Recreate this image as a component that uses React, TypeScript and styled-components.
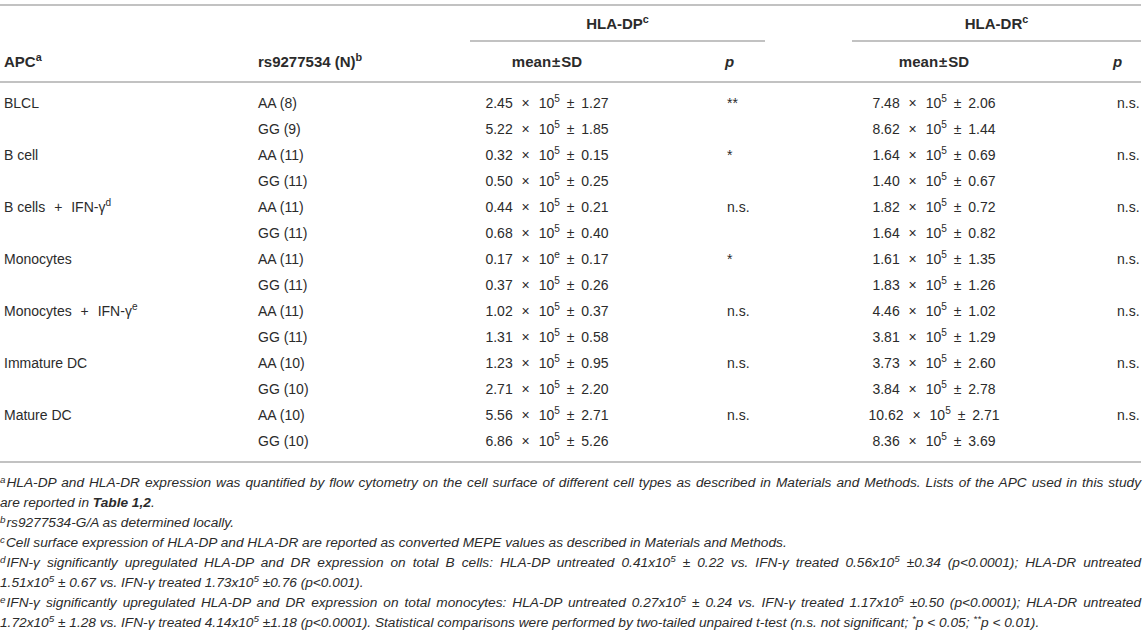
import React from 'react';
import styled, { createGlobalStyle } from 'styled-components';

type Row = {
  apc?: React.ReactNode;
  geno: string;
  dp: [string, string, string];
  dpP?: string;
  dr: [string, string, string];
  drP?: string;
};

const GlobalStyle = createGlobalStyle`
  html, body {
    margin: 0;
    padding: 0;
    background: #fff;
  }
  body {
    font-family: "Liberation Sans", Arial, sans-serif;
    color: #2b2b2b;
  }
`;

const Page = styled.div`
  width: 1141px;
  padding-top: 4px;
`;

const Table = styled.table`
  width: 1141px;
  border-collapse: collapse;
  border-spacing: 0;
  table-layout: fixed;
  font-size: 14px;
  border-top: 2px solid #c2c2c2;
  border-bottom: 2px solid #c2c2c2;
`;

const HeadRow = styled.tr<{ $h: number; $rule?: boolean }>`
  height: ${(p) => p.$h}px;
  ${(p) => (p.$rule ? 'border-bottom: 2px solid #c2c2c2;' : '')}
`;

const Th = styled.th<{ $align?: 'left' | 'center'; $pad?: number; $rule?: boolean; $italic?: boolean }>`
  padding: 0 0 0 ${(p) => p.$pad ?? 0}px;
  text-align: ${(p) => p.$align ?? 'left'};
  font-size: 15px;
  font-weight: bold;
  font-style: ${(p) => (p.$italic ? 'italic' : 'normal')};
  vertical-align: middle;
  white-space: nowrap;
  border-bottom: ${(p) => (p.$rule ? '2px solid #c2c2c2' : 'none')};
`;

const DataRow = styled.tr`
  height: 26px;
  &:first-child td {
    padding-top: 7px;
  }
  &:last-child td {
    padding-bottom: 7px;
  }
`;

const Td = styled.td<{ $align?: 'left' | 'center'; $pad?: number }>`
  padding: 0 0 0 ${(p) => p.$pad ?? 0}px;
  text-align: ${(p) => p.$align ?? 'left'};
  vertical-align: middle;
  white-space: nowrap;
  line-height: 26px;
`;

const Sup = styled.sup`
  font-size: 0.72em;
  line-height: 0;
  vertical-align: 0.55em;
`;

const Op = styled.span<{ $gap?: number }>`
  margin: 0 ${(p) => p.$gap ?? 3}px;
`;

const Notes = styled.div`
  margin-top: 10px;
  font-size: 13.7px;
  font-style: italic;
  line-height: 20px;
  white-space: nowrap;
`;

const Line = styled.div<{ $full?: boolean }>`
  text-align: ${(p) => (p.$full ? 'justify' : 'left')};
  text-align-last: ${(p) => (p.$full ? 'justify' : 'left')};
`;

const NoteMark = styled.sup`
  font-size: 0.72em;
  line-height: 0;
  vertical-align: 0.45em;
  margin-right: 1px;
`;

const Ref = styled.b`
  font-weight: bold;
`;

const Val = ({ v }: { v: [string, string, string] }) => (
  <>
    {v[0]} <Op $gap={5}>×</Op> 10<Sup>{v[1]}</Sup> <Op $gap={3}>±</Op> {v[2]}
  </>
);

const Exp = ({ b, e }: { b: string; e: string }) => (
  <>
    {b}x10<Sup>{e}</Sup>
  </>
);

const Plus = () => <Op $gap={5}>+</Op>;

const rows: Row[] = [
  { apc: 'BLCL', geno: 'AA (8)', dp: ['2.45', '5', '1.27'], dpP: '**', dr: ['7.48', '5', '2.06'], drP: 'n.s.' },
  { geno: 'GG (9)', dp: ['5.22', '5', '1.85'], dr: ['8.62', '5', '1.44'] },
  { apc: 'B cell', geno: 'AA (11)', dp: ['0.32', '5', '0.15'], dpP: '*', dr: ['1.64', '5', '0.69'], drP: 'n.s.' },
  { geno: 'GG (11)', dp: ['0.50', '5', '0.25'], dr: ['1.40', '5', '0.67'] },
  {
    apc: (
      <>
        B cells <Plus /> IFN-γ<Sup>d</Sup>
      </>
    ),
    geno: 'AA (11)',
    dp: ['0.44', '5', '0.21'],
    dpP: 'n.s.',
    dr: ['1.82', '5', '0.72'],
    drP: 'n.s.',
  },
  { geno: 'GG (11)', dp: ['0.68', '5', '0.40'], dr: ['1.64', '5', '0.82'] },
  { apc: 'Monocytes', geno: 'AA (11)', dp: ['0.17', 'e', '0.17'], dpP: '*', dr: ['1.61', '5', '1.35'], drP: 'n.s.' },
  { geno: 'GG (11)', dp: ['0.37', '5', '0.26'], dr: ['1.83', '5', '1.26'] },
  {
    apc: (
      <>
        Monocytes <Plus /> IFN-γ<Sup>e</Sup>
      </>
    ),
    geno: 'AA (11)',
    dp: ['1.02', '5', '0.37'],
    dpP: 'n.s.',
    dr: ['4.46', '5', '1.02'],
    drP: 'n.s.',
  },
  { geno: 'GG (11)', dp: ['1.31', '5', '0.58'], dr: ['3.81', '5', '1.29'] },
  { apc: 'Immature DC', geno: 'AA (10)', dp: ['1.23', '5', '0.95'], dpP: 'n.s.', dr: ['3.73', '5', '2.60'], drP: 'n.s.' },
  { geno: 'GG (10)', dp: ['2.71', '5', '2.20'], dr: ['3.84', '5', '2.78'] },
  { apc: 'Mature DC', geno: 'AA (10)', dp: ['5.56', '5', '2.71'], dpP: 'n.s.', dr: ['10.62', '5', '2.71'], drP: 'n.s.' },
  { geno: 'GG (10)', dp: ['6.86', '5', '5.26'], dr: ['8.36', '5', '3.69'] },
];

export default function App() {
  return (
    <Page>
      <GlobalStyle />
      <Table>
        <colgroup>
          <col style={{ width: 254 }} />
          <col style={{ width: 216 }} />
          <col style={{ width: 154 }} />
          <col style={{ width: 141 }} />
          <col style={{ width: 87 }} />
          <col style={{ width: 164 }} />
          <col style={{ width: 125 }} />
        </colgroup>
        <thead>
          <HeadRow $h={36}>
            <Th />
            <Th />
            <Th colSpan={2} $align="center" $rule>
              HLA-DP<Sup>c</Sup>
            </Th>
            <Th />
            <Th colSpan={2} $align="center" $rule>
              HLA-DR<Sup>c</Sup>
            </Th>
          </HeadRow>
          <HeadRow $h={41} $rule>
            <Th $pad={4}>
              APC<Sup>a</Sup>
            </Th>
            <Th $pad={4}>
              rs9277534 (N)<Sup>b</Sup>
            </Th>
            <Th $align="center">
              mean<Op $gap={1}>±</Op>SD
            </Th>
            <Th $pad={101} $italic>
              p
            </Th>
            <Th />
            <Th $align="center">
              mean<Op $gap={1}>±</Op>SD
            </Th>
            <Th $pad={97} $italic>
              p
            </Th>
          </HeadRow>
        </thead>
        <tbody>
          {rows.map((r, i) => (
            <DataRow key={i}>
              <Td $pad={4}>{r.apc}</Td>
              <Td $pad={4}>{r.geno}</Td>
              <Td $align="center">
                <Val v={r.dp} />
              </Td>
              <Td $pad={103}>{r.dpP}</Td>
              <Td />
              <Td $align="center">
                <Val v={r.dr} />
              </Td>
              <Td $pad={101}>{r.drP}</Td>
            </DataRow>
          ))}
        </tbody>
      </Table>
      <Notes>
        <Line $full>
          <NoteMark>a</NoteMark>HLA-DP and HLA-DR expression was quantified by flow cytometry on the cell surface of
          different cell types as described in Materials and Methods. Lists of the APC used in this study
        </Line>
        <Line>
          are reported in <Ref>Table 1,2</Ref>.
        </Line>
        <Line>
          <NoteMark>b</NoteMark>rs9277534-G/A as determined locally.
        </Line>
        <Line>
          <NoteMark>c</NoteMark>Cell surface expression of HLA-DP and HLA-DR are reported as converted MEPE values as
          described in Materials and Methods.
        </Line>
        <Line $full>
          <NoteMark>d</NoteMark>IFN-γ significantly upregulated HLA-DP and DR expression on total B cells: HLA-DP
          untreated <Exp b="0.41" e="5" /> ± 0.22 vs. IFN-γ treated <Exp b="0.56" e="5" /> ±0.34 (p&lt;0.0001); HLA-DR
          untreated
        </Line>
        <Line>
          <Exp b="1.51" e="5" /> ± 0.67 vs. IFN-γ treated <Exp b="1.73" e="5" /> ±0.76 (p&lt;0.001).
        </Line>
        <Line $full>
          <NoteMark>e</NoteMark>IFN-γ significantly upregulated HLA-DP and DR expression on total monocytes: HLA-DP
          untreated <Exp b="0.27" e="5" /> ± 0.24 vs. IFN-γ treated <Exp b="1.17" e="5" /> ±0.50 (p&lt;0.0001); HLA-DR
          untreated
        </Line>
        <Line>
          <Exp b="1.72" e="5" /> ± 1.28 vs. IFN-γ treated <Exp b="4.14" e="5" /> ±1.18 (p&lt;0.0001). Statistical
          comparisons were performed by two-tailed unpaired t-test (n.s. not significant; <Sup>*</Sup>p &lt; 0.05;{' '}
          <Sup>**</Sup>p &lt; 0.01).
        </Line>
      </Notes>
    </Page>
  );
}
